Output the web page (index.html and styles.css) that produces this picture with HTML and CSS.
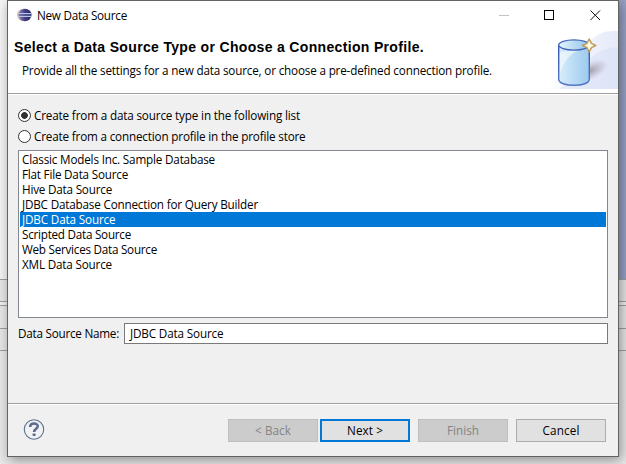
FILE: index.html
```html
<!DOCTYPE html>
<html lang="en">
<head>
<meta charset="utf-8">
<title>New Data Source</title>
<link rel="stylesheet" href="styles.css">
</head>
<body>
<div class="backdrop">
  <div class="pane editor"></div>
  <div class="pane tabs"></div>
  <div class="pane gap"></div>
  <div class="pane toolbar"></div>
  <div class="pane row"></div>
  <div class="pane rest"></div>
</div>
<main class="dialog">
  <div class="titlebar">
    <svg class="app-icon" width="15" height="15" viewBox="0 0 15 15">
      <defs><linearGradient id="globe" x1="0" y1="0" x2="1" y2="0"><stop offset="0" stop-color="#8984bd"/><stop offset=".5" stop-color="#443d86"/><stop offset="1" stop-color="#292563"/></linearGradient></defs>
      <ellipse cx="6.6" cy="7" rx="6.6" ry="6.3" fill="#d9bfae"/>
      <ellipse cx="8" cy="7" rx="6.5" ry="6.2" fill="url(#globe)"/>
      <path d="M1 5.5h13.5M1 8.5h13.5" stroke="#b9c6e2"/>
      <path d="M2 7h12" stroke="#6670ae"/>
    </svg>
    <span class="title"><span class="t t-title">New Data Source</span></span>
    <svg class="controls" width="106" height="15" viewBox="0 0 106 15" fill="none">
      <path d="M1 7.5h10" stroke="#c4c4c4"/>
      <rect x="46.5" y="2.5" width="9" height="9" stroke="#000"/>
      <path d="M92.5 2.5l9.5 9.5M102 2.5l-9.5 9.5" stroke="#111"/>
    </svg>
  </div>
  <header class="banner">
    <div class="copy">
      <h1><span class="t t-head">Select a Data Source Type or Choose a Connection Profile.</span></h1>
      <p><span class="t t-sub">Provide all the settings for a new data source, or choose a pre-defined connection profile.</span></p>
    </div>
    <svg class="art" width="75" height="60" viewBox="543 30 75 60">
      <defs>
        <linearGradient id="sky" x1="0" x2="1"><stop offset="0" stop-color="#fff"/><stop offset=".45" stop-color="#f3f5fd"/><stop offset="1" stop-color="#e6ebf9"/></linearGradient>
        <linearGradient id="side" x1="0" x2="1"><stop offset="0" stop-color="#d8edfc"/><stop offset=".35" stop-color="#c2e1f7"/><stop offset="1" stop-color="#9ccaee"/></linearGradient>
        <linearGradient id="rim" x1="0" x2="1"><stop offset="0" stop-color="#e4f4fd"/><stop offset="1" stop-color="#8fc4e9"/></linearGradient>
        <linearGradient id="edge" x1="0" y1="0" x2="0" y2="1"><stop offset="0" stop-color="#3557ae"/><stop offset="1" stop-color="#5578c9"/></linearGradient>
        <radialGradient id="shade"><stop offset="0" stop-color="#8f8497" stop-opacity=".75"/><stop offset="1" stop-color="#a79caf" stop-opacity="0"/></radialGradient>
      </defs>
      <path d="M543 89C570 83 581 31 612 31H618V89Z" fill="url(#sky)"/>
      <path d="M560 89C584 62 595 49 618 47V89Z" fill="#d5def5" opacity=".5"/>
      <ellipse cx="590" cy="71" rx="20" ry="9" fill="url(#shade)" transform="rotate(-25 590 71)"/>
      <path d="M558.7 45V80C561 87 587 87 589.3 80V45Z" fill="url(#side)"/>
      <path d="M559.5 53Q565 50 578 50.5Q563 58 559.5 77Z" fill="#fff" opacity=".5"/>
      <path d="M558.7 45V80C561 87 587 87 589.3 80V45" fill="none" stroke="url(#edge)" stroke-width="1.4"/>
      <ellipse cx="574" cy="45" rx="15.3" ry="5.1" fill="url(#rim)" stroke="#4164b7" stroke-width="1.3"/>
      <path d="M589.2 39L591.5 43.3L595.7 45.5L591.5 47.7L589.2 52L586.9 47.7L582.7 45.5L586.9 43.3Z" fill="#fff8e0" stroke="#bb9b60" stroke-width="1.5" stroke-linejoin="round"/>
    </svg>
  </header>
  <section class="content">
    <label class="radio"><i class="dot on"></i><span class="t t-r1">Create from a data source type in the following list</span></label>
    <label class="radio"><i class="dot"></i><span class="t t-r2">Create from a connection profile in the profile store</span></label>
    <ul class="list">
      <li><span class="t l1">Classic Models Inc. Sample Database</span></li>
      <li><span class="t l2">Flat File Data Source</span></li>
      <li><span class="t l3">Hive Data Source</span></li>
      <li><span class="t l4">JDBC Database Connection for Query Builder</span></li>
      <li class="selected"><span class="t l5">JDBC Data Source</span></li>
      <li><span class="t l6">Scripted Data Source</span></li>
      <li><span class="t l7">Web Services Data Source</span></li>
      <li><span class="t l8">XML Data Source</span></li>
    </ul>
    <div class="field">
      <span class="name"><span class="t t-name">Data Source Name:</span></span>
      <div class="input"><span class="t l5">JDBC Data Source</span></div>
    </div>
  </section>
  <footer class="actions">
    <svg class="help" width="22" height="22" viewBox="0 0 22 22" fill="none">
      <circle cx="11" cy="10.5" r="9.7" fill="#f1f1f2" stroke="#5d6f90" stroke-width="1.1"/>
      <path d="M7.1 8C7.2 3.3 14.9 3.6 14.8 7.3C14.7 9.8 11.1 9.8 11.1 13" stroke="#5a6b8f" stroke-width="2.5"/>
      <rect x="9.6" y="14.4" width="3" height="2.7" rx=".8" fill="#5a6b8f"/>
    </svg>
    <div class="buttons">
      <button disabled><span class="t b1">&lt; Back</span></button>
      <button class="primary"><span class="t b2">Next &gt;</span></button>
      <button class="apart" disabled><span class="t b3">Finish</span></button>
      <button class="apart"><span class="t b4">Cancel</span></button>
    </div>
  </footer>
</main>
<script src="fit.js"></script>
</body>
</html>
```
FILE: fit.js
```js
// Adjust letter spacing so that each label fills the measure set for it in the stylesheet.
document.querySelectorAll('.t').forEach(function (el) {
  var want = parseFloat(getComputedStyle(el).getPropertyValue('--measure'));
  var have = el.getBoundingClientRect().width;
  el.style.letterSpacing = (want - have) / el.textContent.length + 'px';
});
```
FILE: styles.css
```css
* { box-sizing: border-box; }
body {
  margin: 0;
  width: 626px;
  height: 464px;
  overflow: hidden;
  font: 11.7px/15px "Open Sans", "Noto Sans", sans-serif;
  color: #000;
  display: grid;
}
.backdrop, .dialog { grid-area: 1 / 1; }
.backdrop { display: flex; flex-direction: column; height: 464px; background: #e9e9e9; }
.pane { border-bottom: 1px solid #a0a0a0; flex: none; }
.editor { height: 280px; background: linear-gradient(90deg, #f6f6f6 0 50%, #98a3c6 50%); }
.tabs { height: 22px; background: #e8e8e8; }
.gap { height: 4px; background: #f2f2f2; }
.toolbar { height: 23px; }
.row { height: 22px; }
.rest { flex: 1; border: 0; }
.dialog {
  width: 612px;
  height: 457px;
  margin-left: 7px;
  border: 1px solid #626262;
  background: #f0f0f0;
  box-shadow: 2px 3px 12px rgba(0, 0, 0, .4);
  display: flex;
  flex-direction: column;
}
.t { display: inline-block; vertical-align: top; white-space: nowrap; }
.titlebar { height: 29px; background: #fff; display: flex; align-items: center; padding: 0 14px 0 9px; }
.title { margin-left: 5px; flex: 1; }
.banner { height: 64px; background: #fff; border-bottom: 1px solid #a0a0a0; display: flex; }
.copy { flex: 1; padding-left: 6px; }
h1 { margin: 9px 0 0; font: bold 14px/16px "Liberation Sans", sans-serif; }
p { margin: 8px 0 0 8px; }
.art { flex: none; }
.content { height: 309px; border-top: 1px solid #fff; padding: 13px 10px 0; }
.radio { display: flex; align-items: center; height: 15px; margin-bottom: 6px; }
.dot { width: 13px; height: 13px; border: 1px solid #333; border-radius: 50%; background: #fff; margin-right: 3px; }
.on { background: radial-gradient(circle, #333 0 3px, #fff 3.7px); }
.list { list-style: none; margin: 0; padding: 1px; width: 590px; height: 168px; border: 1px solid #828790; background: #fff; }
.list li { height: 15px; padding-left: 2px; }
.list .selected { background: #0078d7; color: #fff; }
.field { display: flex; align-items: center; margin-top: 5px; }
.name { width: 106px; }
.input { flex: 1; height: 21px; border: 1px solid #7a7a7a; background: #fff; padding: 2px 5px; }
.actions { flex: 1; border-top: 1px solid #a0a0a0; box-shadow: inset 0 1px #fff; display: flex; justify-content: space-between; padding: 15px 12px 0 15px; }
.buttons { display: flex; }
button { width: 90px; height: 23px; padding: 0; border: 1px solid #adadad; background: #e1e1e1; font: inherit; color: #000; }
button:disabled { background: #ccc; border-color: #bfbfbf; color: #838383; }
.primary { margin-left: 2px; border: 2px solid #0078d7; }
.apart { margin-left: 8px; }
.t-title { --measure: 90; }
.t-head { --measure: 410; }
.t-sub { --measure: 470; }
.t-r1 { --measure: 266; }
.t-r2 { --measure: 271.5; }
.l1 { --measure: 193; }
.l2 { --measure: 106; }
.l3 { --measure: 90; }
.l4 { --measure: 236; }
.l5 { --measure: 93.5; }
.l6 { --measure: 109; }
.l7 { --measure: 135; }
.l8 { --measure: 90; }
.t-name { --measure: 101; }
.b1 { --measure: 36; }
.b2 { --measure: 36; }
.b3 { --measure: 32; }
.b4 { --measure: 37; }
```
